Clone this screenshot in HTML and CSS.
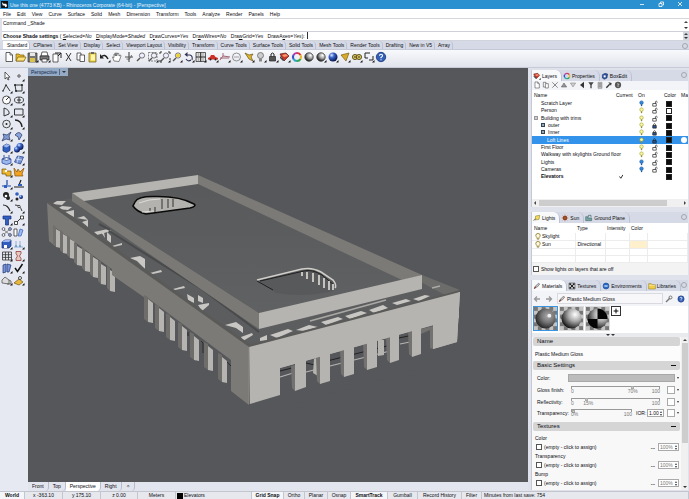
FILE: index.html
```html
<!DOCTYPE html>
<html lang="en">
<head>
<meta charset="utf-8">
<title>Use this one (4773 KB) - Rhinoceros Corporate (64-bit) - [Perspective]</title>
<link rel="stylesheet" href="styles.css">
</head>
<body>
<header class="titlebar">
  <svg class="logo" viewBox="0 0 8 8"><rect width="8" height="8" fill="#111"/><path d="M1 1l2 2 3 0 1 3-2 1-1-2-2 0z" fill="#fff"/></svg>
  <span class="title">Use this one (4773 KB) - Rhinoceros Corporate (64-bit) - [Perspective]</span>
  <button class="win" aria-label="Minimize"><svg viewBox="0 0 8 8"><path d="M2 4.500h4" /></svg></button>
  <button class="win" aria-label="Restore"><svg viewBox="0 0 8 8"><path d="M2 3.500h3v3H2zM3.500 3V2h3v3H5.500"/></svg></button>
  <button class="win" aria-label="Close"><svg viewBox="0 0 8 8"><path d="M2 2l4 4M6 2L2 6"/></svg></button>
</header>
<nav class="menu" id="menu"></nav>
<section class="command">
  <div class="history"><span>Command _Shade</span><div class="updown"><i class="up"></i><i class="down"></i></div></div>
  <div class="prompt"><label for="cmd"><b>Choose Shade settings</b> ( <u>S</u>elected=<em>No</em> <u>D</u>isplayMode=<em>Shaded</em> D<u>r</u>awCurves=<em>Yes</em> Dr<u>a</u>wWires=<em>No</em> Dra<u>w</u>Grid=<em>Yes</em> DrawA<u>x</u>es=<i>Yes</i>):</label><input id="cmd" type="text"><div class="updown dark"><i class="up"></i><i class="down"></i></div></div>
</section>
<nav class="tooltabs" id="tooltabs"></nav>
<div class="toolbar" id="toolbar"></div>
<main class="work">
  <aside class="sidebar" id="sidebar"></aside>
  <section class="center">
    <div class="viewport">
      <button class="viewname">Perspective <span class="sep"></span><i class="down"></i></button>
      <svg class="scene" id="scene" viewBox="28 68 500 414" preserveAspectRatio="xMidYMid slice" role="img" aria-label="Building model"></svg>
    </div>
    <nav class="viewtabs"><a href="#">Front</a><a href="#">Top</a><a href="#" class="on">Perspective</a><a href="#">Right</a><a href="#" aria-label="Add viewport">✧</a></nav>
  </section>
  <aside class="panels">
    <section class="panel layers">
      <nav class="ptabs" data-tabs="Layers:layers,Properties:wheel,BoxEdit:boxedit"></nav>
      <div class="ptools" id="ptools"></div>
      <div class="list">
        <table class="layertable">
          <thead><tr><th class="n">Name</th><th class="cur">Current</th><th class="on">On</th><th class="lk"></th><th class="col">Color</th><th class="ma">Ma</th></tr></thead>
          <tbody id="layers"></tbody>
        </table>
      </div>
      <div class="hscroll"><i class="left"></i><span class="bar"></span><i class="right"></i></div>
    </section>
    <section class="panel lights">
      <nav class="ptabs" data-tabs="Lights:lamp,Sun:sun,Ground Plane:ground"></nav>
      <table class="lighttable">
        <thead><tr><th class="n">Name</th><th class="ty">Type</th><th class="in">Intensity</th><th class="co">Color</th><th></th></tr></thead>
        <tbody>
          <tr><td><svg class="ic8" viewBox="0 0 8 8"><use href="#bulbline"/></svg>Skylight</td><td></td><td></td><td></td><td></td></tr>
          <tr><td><svg class="ic8" viewBox="0 0 8 8"><use href="#bulbline"/></svg>Sun</td><td>Directional</td><td></td><td class="suncolor"></td><td></td></tr>
          <tr><td></td><td></td><td></td><td></td><td></td></tr>
          <tr><td></td><td></td><td></td><td></td><td></td></tr>
        </tbody>
      </table>
      <label class="offlights"><input type="checkbox">Show lights on layers that are off</label>
    </section>
    <section class="panel materials">
      <nav class="ptabs" data-tabs="Materials:brush,Textures:tex,Environments:env,Libraries:lib"></nav>
      <div class="crumbs">
        <button aria-label="Back"><svg viewBox="0 0 8 8"><path d="M7 4H1.500M4 1.500L1.500 4 4 6.500" fill="none" stroke="#999" stroke-width="1.300"/></svg></button>
        <button aria-label="Forward"><svg viewBox="0 0 8 8"><path d="M1 4h5.500M4 1.500L6.500 4 4 6.500" fill="none" stroke="#999" stroke-width="1.300"/></svg></button>
        <div class="path"><svg class="ic8" viewBox="0 0 12 12"><use href="#brush"/></svg>Plastic Medium Gloss</div>
        <button aria-label="Tools"><svg viewBox="0 0 8 8"><path d="M1 7l4-4" stroke="#777" stroke-width="1.500"/><circle cx="5.500" cy="2.500" r="1.500" fill="none" stroke="#777"/></svg></button>
        <button aria-label="Help"><svg viewBox="0 0 12 12"><use href="#help"/></svg></button>
      </div>
      <div class="thumbs">
        <button class="thumb sel" aria-label="Plastic Medium Gloss"><svg viewBox="0 0 24 24"><rect width="24" height="24" fill="url(#chk)"/><circle cx="12" cy="12" r="10.500" fill="url(#ball)"/><circle cx="16" cy="9" r="2" fill="#fff" opacity=".85"/></svg></button>
        <button class="thumb" aria-label="Plastic"><svg viewBox="0 0 24 24"><rect width="24" height="24" fill="url(#chk)"/><circle cx="12" cy="12" r="10.500" fill="url(#ball2)"/></svg></button>
        <button class="thumb" aria-label="Checker"><svg viewBox="0 0 24 24"><rect width="24" height="24" fill="url(#chk)"/><circle cx="12" cy="12" r="10.500" fill="url(#ball2)"/><path d="M12 12.500V1.500A10.500 10.500 0 0 1 22.500 12.500zM12 12.500V22.500A10.500 10.500 0 0 1 1.500 12.500z" fill="#050505"/></svg></button>
        <button class="plus" aria-label="Add material"><svg viewBox="0 0 10 10"><path d="M5 2v6M2 5h6" stroke="#000" stroke-width="1.200"/></svg></button>
      </div>
      <div class="splitter"><i class="down"></i><i class="down"></i></div>
      <div class="props">
        <div class="fields">
          <h3>Name</h3>
          <input class="matname" type="text" value="Plastic Medium Gloss" aria-label="Name">
          <h3>Basic Settings<span class="minus"></span></h3>
          <div class="basic">
            <div class="row"><label for="mc">Color:</label><button id="mc" class="swatch"></button><i class="down"></i></div>
            <div class="row"><label for="gl">Gloss finish:</label><div class="slide"><input id="gl" type="range" value="70"><span><b>0</b><b class="v70">70%</b><b>100</b></span></div><button class="chip" aria-label="Gloss color"></button><i class="down"></i></div>
            <div class="row"><label for="rf">Reflectivity:</label><div class="slide"><input id="rf" type="range" value="15"><span><b>0</b><b class="v15">15%</b><b>100</b></span></div><button class="chip" aria-label="Reflection color"></button><i class="down"></i></div>
            <div class="row"><label for="tr">Transparency:</label><div class="slide"><input id="tr" type="range" value="0"><span><b>0%</b><b>100</b></span></div><label class="ior" for="ior">IOR:</label><div class="spin"><input id="ior" type="text" value="1.00"><div class="updown"><i class="up"></i><i class="down"></i></div></div><button class="chip" aria-label="Transparency color"></button><i class="down"></i></div>
          </div>
          <h3>Textures<span class="minus"></span></h3>
          <div class="textures" id="textures"></div>
        </div>
        <div class="vscroll"><i class="up"></i><span class="bar"></span><i class="down"></i></div>
      </div>
    </section>
  </aside>
</main>
<footer class="status">
  <span class="world on">World</span><span class="c1">x -363.10</span><span class="c2">y 175.10</span><span class="c3">z 0.00</span><span class="c4">Meters</span><span class="c5"><i class="sq"></i>Elevators</span>
  <span class="g1 on">Grid Snap</span><span class="g2">Ortho</span><span class="g3">Planar</span><span class="g4">Osnap</span><span class="g5 on">SmartTrack</span><span class="g6">Gumball</span><span class="g7">Record History</span><span class="g8">Filter</span><span class="g9">Minutes from last save: 754</span>
</footer>
<svg class="defs" aria-hidden="true">
  <defs>
    <pattern id="chk" width="8" height="8" patternUnits="userSpaceOnUse"><rect width="8" height="8" fill="#c4c4c4"/><path d="M0 0h4v4H0zM4 4h4v4H4z" fill="#777"/></pattern>
    <radialGradient id="ball" cx=".62" cy=".38" r=".7"><stop offset="0" stop-color="#aaa"/><stop offset=".45" stop-color="#777"/><stop offset="1" stop-color="#181818"/></radialGradient>
    <radialGradient id="ball2" cx=".68" cy=".3" r=".75"><stop offset="0" stop-color="#fff"/><stop offset=".45" stop-color="#aaa"/><stop offset="1" stop-color="#111"/></radialGradient>
    <radialGradient id="blueball" cx=".35" cy=".3" r=".7"><stop offset="0" stop-color="#dfe9ff"/><stop offset=".4" stop-color="#3863cc"/><stop offset="1" stop-color="#08174f"/></radialGradient>
    <linearGradient id="roof" x1="0" y1="0" x2="0" y2="1"><stop offset="0" stop-color="#58595b"/><stop offset="1" stop-color="#606163"/></linearGradient>
    <symbol id="bulbline" viewBox="0 0 8 8"><path d="M3 5.500Q1.500 4 1.500 2.800a2.500 2.300 0 0 1 5 0Q6.500 4 5 5.500V7H3z" fill="#fffbe0" stroke="#85721f" stroke-width=".9"/></symbol>
  </defs>
</svg>
<script src="app.js"></script>
</body>
</html>
```
FILE: styles.css
```css
* { box-sizing: border-box; }
html, body { height: 100%; }
body {
  margin: 0; display: flex; flex-direction: column; overflow: hidden;
  font: 5px/8px "Liberation Sans", sans-serif;
  color: #0c0c10; background: #e5e7ee;
}
button, input { font: inherit; color: inherit; border: 0; padding: 0; margin: 0; background: none; border-radius: 0; min-width: 0; }
a { color: inherit; text-decoration: none; }
svg { display: block; }
.defs { position: absolute; width: 0; height: 0; }
.up, .down, .left, .right { display: block; width: 0; height: 0; border: 2px solid transparent; flex: none; }
.up { border-top: 0; border-bottom-color: #444; }
.down { border-bottom: 0; border-top-color: #333; }
.left { border-left: 0; border-right-color: #444; }
.right { border-right: 0; border-left-color: #444; }
.updown { display: flex; flex-direction: column; align-items: center; justify-content: space-around; width: 6px; align-self: stretch; }

.titlebar { height: 9px; flex: none; display: flex; align-items: center; background: #2b90cf; color: #e4f3fc; padding-left: 1px; }
.logo { width: 7px; height: 7px; margin-right: 2px; }
.title { flex: 1; }
.win { width: 19px; height: 9px; display: flex; justify-content: center; }
.win svg { width: 8px; height: 8px; fill: none; stroke: #fff; stroke-width: .8; }

.menu { height: 10px; flex: none; display: flex; gap: 6px; padding: 1px 3px; background: #fff; border-bottom: 1px solid #d6d7db; }
.command { flex: none; background: #fff; border-left: 2px solid #dfe2ea; }
.history { height: 13px; display: flex; justify-content: space-between; border-bottom: 1px solid #cfd1d8; padding-left: 1px; }
.prompt { height: 9px; display: flex; padding-left: 1px; border-bottom: 1px solid #d2d4dc; }
.prompt input { flex: 1; border-left: 1px solid #333; margin-left: 2px; height: 7px; }
.prompt em { margin-right: 3px; }
.dark { background: #d5d8e0; }

.tooltabs { height: 9px; flex: none; display: flex; background: #d6dae6; padding-left: 3px; border-bottom: 1px solid #c5c9d6; }
.tooltabs a { padding: 1px 2px 0 3px; border-right: 1px solid #bcc2d3; border-radius: 0 4px 0 0; line-height: 7px; white-space: nowrap; }
.tooltabs a.on { background: #fff; padding-left: 4px; }
.toolbar { height: 18px; flex: none; display: flex; padding: 1px 3px; background: linear-gradient(#f8f9fc, #e1e4ec); border-bottom: 1px solid #c7cbd5; }
.tool { width: 12px; height: 12px; flex: none; }
.tool svg { width: 12px; height: 12px; }

.work { flex: 1; min-height: 0; display: flex; }
.sidebar { width: 28px; flex: none; display: grid; grid-template-columns: 12px 12px; grid-auto-rows: 12px; padding: 2px 1px; align-content: start; background: #e6e9f1; }
.center { flex: 1; min-width: 0; display: flex; flex-direction: column; }
.viewport { flex: 1; min-height: 0; position: relative; background: #56575a; }
.scene { position: absolute; inset: 0; width: 100%; height: 100%; }
.viewname { position: absolute; z-index: 1; left: 0; top: 0; display: flex; align-items: center; gap: 2px; height: 8px; padding: 0 2px 0 3px; background: #95aac5; color: #14284a; }
.sep { width: 1px; height: 6px; background: #556a8a; }
.viewtabs { height: 9px; flex: none; display: flex; background: #e3e5ee; }
.viewtabs a { padding: 0 4px; border-right: 1px solid #b7bccb; border-radius: 0 0 4px 0; }
.viewtabs a.on { background: #fff; }

.panels { width: 161px; flex: none; display: flex; flex-direction: column; gap: 5px; padding: 2px 1px 1px 3px; background: #dfe2eb; }
.panel { display: flex; flex-direction: column; flex: none; background: #f3f4f8; border-left: 1px solid #c5c9d3; }
.layers { flex: 138 1 0; min-height: 0; }
.lights { height: 63px; }
.materials { flex: 211 1 0; min-height: 0; }
.ptabs { height: 11px; flex: none; display: flex; background: #d6dae6; }
.ptabs a { display: flex; align-items: center; gap: 1px; padding: 0 4px 0 1px; border-right: 1px solid #bcc2d3; border-radius: 0 6px 0 0; white-space: nowrap; }
.ptabs a.on { background: #f8f9fb; }
.ptabs svg, .ic8 { width: 8px; height: 8px; flex: none; }
.gear { width: 6px; height: 6px; flex: none; border: 1px solid #a3a6ad; border-radius: 50%; }
.ptabs .gear, .tooltabs .gear { margin: 2px 1px 0 auto; }
.ptools { height: 9px; flex: none; display: flex; gap: 1px; padding-left: 1px; }
.ptools .tool, .ptools svg { width: 8px; height: 8px; }
.list { flex: 1; min-height: 0; overflow: hidden; background: #fff; }
table { border-collapse: collapse; width: 100%; table-layout: fixed; }
th, td { padding: 0; text-align: left; white-space: nowrap; }
th { font-weight: normal; }
.layertable th { height: 10px; }
.layertable td { height: 7px; line-height: 7px; }
.layertable tr:nth-child(3n) td { height: 8px; }
.layertable .n { padding-left: 2px; }
.cur { width: 22px; }
.layertable .on { width: 13px; }
.lk { width: 13px; }
.col { width: 17px; }
.ma { width: 7px; overflow: hidden; }
.layertable td.l0 { padding-left: 9px; }
.layertable td.g0 { padding-left: 2px; }
.layertable td.g1 { padding-left: 9px; }
.layertable td.l2 { padding-left: 15px; }
.layertable svg { width: 7px; height: 7px; }
.layertable tr.sel { background: #3393ea; color: #fff; }
.layertable tr.bold { font-weight: bold; }
.box { display: inline-block; width: 4px; height: 4px; border: 1px solid #999; background: #ccc; margin-right: 3px; }
.box.deep { border-color: #345; background: #9ab; }
.csq { display: block; width: 6px; height: 6px; margin-left: 2px; background: #0b0b0b; border: 1px solid #222; }
.csq.open { background: #fff; }
.dot { display: block; width: 6px; height: 6px; border-radius: 50%; background: #fff; }
.hscroll { height: 8px; flex: none; display: flex; align-items: center; gap: 3px; padding: 1px 2px; background: #f0f0f1; }
.hscroll .bar { flex: 1; height: 6px; background: #cdcdce; margin-right: 14px; }

.lighttable { background: #fff; flex: none; }
.lighttable th { height: 10px; padding-left: 2px; }
.lighttable td { height: 7px; line-height: 7px; border-bottom: 1px solid #ececec; border-right: 1px solid #ececec; padding-left: 2px; }
.lighttable td svg { float: left; height: 7px; }
.lighttable .n { width: 43px; }
.ty { width: 30px; }
.in { width: 24px; }
.co { width: 18px; }
.lighttable td.suncolor { background: #fff0cd; }
.offlights { display: flex; align-items: center; gap: 2px; padding-left: 1px; flex: 1; background: #f3f3f4; }
input[type=checkbox] { appearance: none; width: 6px; height: 6px; border: 1px solid #555; background: #fff; flex: none; }

.crumbs { height: 15px; flex: none; display: flex; align-items: center; gap: 2px; padding: 0 1px; }
.crumbs button { width: 10px; height: 8px; }
.crumbs button svg { width: 8px; height: 8px; }
.path { flex: 1; height: 11px; display: flex; align-items: center; gap: 1px; border: 1px solid #d9dae0; background: #f7f7f9; }
.thumbs { height: 27px; flex: none; display: flex; gap: 1px; padding: 0 1px; background: #fff; }
.thumb { width: 25px; height: 25px; border: 1px solid #ddd; }
.thumb.sel { border-color: #3b94e0; }
.thumb svg { width: 23px; height: 23px; }
.plus { width: 10px; height: 10px; border: 1px solid #333; }
.plus svg { width: 8px; height: 8px; }
.splitter { height: 4px; flex: none; display: flex; justify-content: center; align-items: center; gap: 1px; background: #e9eaee; }
.props { flex: 1; min-height: 0; display: flex; background: #f8f8f9; }
.fields { flex: 1; min-width: 0; padding: 0 1px; display: flex; flex-direction: column; overflow: hidden; }
h3 { margin: 0; height: 9px; flex: none; display: flex; align-items: center; justify-content: space-between; padding: 0 4px; background: #d5d5d6; font: 6px/9px "Liberation Sans", sans-serif; border-radius: 2px; }
.minus { width: 5px; height: 1px; background: #111; }
.matname { height: 15px; flex: none; background: #fcfcfc; padding-left: 2px; }
.basic { height: 52px; flex: none; display: flex; flex-direction: column; padding: 2px 1px 3px 4px; }
.row { flex: 1; display: flex; align-items: center; gap: 1px; }
.row label { width: 33px; flex: none; }
.row label.ior { width: 10px; margin-left: 3px; }
.row > .down { margin-left: 1px; border-left-width: 1px; border-right-width: 1px; }
.swatch { flex: 1; height: 8px; background: #bcbcbd; border: 1px solid #a8a8a8; margin-left: -3px; }
.slide { flex: 1; min-width: 0; }
.slide input { appearance: none; display: block; width: 100%; height: 3px; border: 1px solid #999; border-bottom: 0; }
.slide input::-webkit-slider-thumb { appearance: none; width: 3px; height: 3px; background: #ccc; border: 1px solid #aaa; }
.slide span { display: flex; justify-content: space-between; line-height: 5px; color: #777; }
.slide b { font-weight: normal; }
.v70 { margin-left: 45%; }
.v15 { margin-right: 55%; }
.chip { width: 8px; height: 8px; border: 1px solid #aaa; background: #fff; margin-left: 6px; }
.ior ~ .chip { margin-left: 2px; }
.spin { display: flex; width: 17px; height: 8px; flex: none; border: 1px solid #aaa; background: #fff; }
.spin input { flex: 1; width: 0; padding-left: 1px; line-height: 6px; }
.spin .updown { width: 4px; }
.spin .up, .spin .down { border-left-width: 1px; border-right-width: 1px; }
.textures { padding: 3px 1px 0 2px; }
.trow { display: flex; align-items: center; height: 10px; }
.trow label { flex: 1; display: flex; align-items: center; gap: 2px; padding-left: 1px; }
.trow .spin { width: 21px; margin-left: 3px; color: #777; }
.trow button { font-weight: bold; }
.vscroll { width: 7px; flex: none; display: flex; flex-direction: column; align-items: center; gap: 2px; padding: 2px 0; background: #f0f0f1; }
.vscroll .bar { width: 6px; flex: 0 1 100px; background: #cdcdce; margin-bottom: auto; }

.status { height: 8px; flex: none; display: flex; background: #e6e8ee; border-top: 1px solid #c3c6cf; line-height: 7px; white-space: nowrap; }
.status span { border-right: 1px solid #c3c6cf; text-align: center; flex: none; }
.status .on { font-weight: bold; background: #f5f6f9; }
.world { width: 25px; }
.c1, .c2, .c4 { width: 38px; }
.c3 { width: 37px; }
.status .c5 { flex: 1 1 0; display: flex; align-items: center; gap: 1px; padding-left: 1px; }
.sq { width: 6px; height: 6px; background: #000; }
.g1 { width: 32px; }
.g2 { width: 21px; }
.g3, .g4 { width: 23px; }
.g5 { width: 37px; }
.g6 { width: 30px; }
.g7 { width: 44px; }
.g8 { width: 20px; }
.status .g9 { width: 207px; text-align: left; padding-left: 2px; }
```
FILE: app.js
```js
const el = id => document.getElementById(id);
const K = '#222', B = '#315fc0', L = '#9db8ef';
const line = (d, c = K, w = 0.9) => `<path d="${d}" fill="none" stroke="${c}" stroke-width="${w}"/>`;
const fill = (d, c, s = 'none') => `<path d="${d}" fill="${c}" stroke="${s}" stroke-width=".7"/>`;
const circ = (x, y, r, f, s = 'none') => `<circle cx="${x}" cy="${y}" r="${r}" fill="${f}" stroke="${s}" stroke-width=".8"/>`;
const tri = fill('M11.500 9v2.500H9z', '#111');
const lens = line('M2 10l3-3', '#555', 1.5) + circ(7, 4.5, 2.6, '#eef', '#555');

const icons = {
  doc: fill('M3 1.500h4l2.500 2.500v6.500H3z', '#fff', K) + line('M7 1.500V4h2.500', K, .6),
  open: fill('M1 3h3l1 1h4v6H1z', '#e5b92f', '#7b5b08') + fill('M1 10l2-4h8l-2 4z', '#ffe37a', '#7b5b08'),
  save: fill('M1 2h9v9H1z', '#777', '#333') + fill('M3 2h5v3H3z', '#e8e8e8') + fill('M3 7h5v4H3z', '#d8c24b') + tri,
  print: fill('M3 1h5l1 4H2z', '#fff', K) + fill('M1 5h9v4H1z', '#777', K) + fill('M3 8h5v3H3z', '#fff', K) + tri,
  exportdoc: fill('M2 3h5v8H2z', '#fff', K) + line('M4 2h6v5M7 5l3-3', K, 1),
  cut: line('M3 2l5 8M8 2L3 10', '#333', 1),
  copy: fill('M2 2h4v7H2z', '#fff', K) + fill('M5 4h4.500v6.500H5z', '#fff', K),
  paste: fill('M2 2h7v9H2z', '#e8cc3f', '#6b5a16') + fill('M4 3.500h4v6H4z', '#fff6b0') + fill('M4 1h3v2H4z', '#666'),
  undo: line('M2 6Q6 2 9 8', K, 1.5) + fill('M1 3v4.500h4z', K) + tri,
  hand: fill('M3 10L1.500 6 3 6.500V3h1.300v2V2h1.300v3l1-3 1.200.5L8 5l1.500-1 .5 1-2 5.500z', '#fff', '#555'),
  rotate: line('M6 1v10M2 6h8', '#555', 1.2) + line('M3.500 8Q8 9 8.500 4', '#555', .8),
  zoom: lens, zoomwin: lens + '<rect x="1.500" y="1.500" width="8.500" height="8.500" fill="none" stroke="#555" stroke-width=".7" stroke-dasharray="2 1"/>' + tri,
  zoomext: lens + line('M1 3V1h2M9 1h2v2M1 9v2h2M11 7v2', K) + tri,
  zoomsel: lens + circ(7, 4.5, 2, '#f1d22e') + tri,
  back: line('M3 4h4q3 1 2 5M3 8q2 3 5 1', '#335', 1.1) + fill('M4.500 1v5L1.500 3.500z', '#335') + tri,
  grid4: fill('M1 1.500h9.500v9H1z', '#ddd', K) + line('M5.700 1.500v9M1 6h9.500', K, 1) + line('M3.400 1.500v9M8 1.500v9', '#888', .6) + tri,
  car: fill('M1 7l2-1 1-2h3l1.500 2L11 7v1.500H1z', '#d02f28') + circ(3.500, 8.500, 1, K) + circ(8.500, 8.500, 1, K) + tri,
  cplane: line('M1 9l3-4 7 1M4 5V2M1 7h9', '#956') + tri,
  circ: circ(5.500, 6, 4, 'none', '#777') + line('M3 6h5', '#999') + tri,
  osnap: fill('M2 2l4 2 4-1-2 3 2 4-4-2z', '#e0b92f', '#675216') + tri,
  bulb: circ(5.500, 4.500, 3, '#ccc', '#666') + fill('M4 7.500h3v3H4z', '#888') + tri,
  lock: fill('M2.500 5.500h6V10h-6z', '#555', K) + line('M4 5.500V3q1.500-2 3 0v2.500', K, 1) + tri,
  layers: fill('M1 3l6-1 3 3-5 5z', '#cf3527', '#571a15') + fill('M3 4l4-1 2 2-4 1z', '#f49a70') + fill('M1 5l4 4-1 1-3-3z', '#444') + tri,
  wheel: [['#d33', 'M6 2A4 4 0 0 1 9.500 4'], ['#e8b72e', 'M9.500 4A4 4 0 0 1 9.500 8'], ['#3aa745', 'M9.500 8A4 4 0 0 1 6 10'], ['#2fa6c9', 'M6 10A4 4 0 0 1 2.500 8'], ['#3450c4', 'M2.500 8A4 4 0 0 1 2.500 4'], ['#b13bb0', 'M2.500 4A4 4 0 0 1 6 2']].map(a => line(a[1], a[0], 2.1)).join(''),
  gray: circ(6, 6, 4.200, 'url(#ball2)', '#333'), gray2: circ(6, 6, 4.200, 'url(#ball2)', '#333') + tri,
  blue: circ(6, 6, 4.500, 'url(#blueball)') + tri,
  cone: fill('M2 4l8-2-3 8z', '#d8ac2a', '#795b12') + tri,
  gears: circ(4, 6, 2.600, '#d9c25a', '#453b12') + circ(8, 6, 2.600, '#d9c25a', '#453b12') + circ(4, 6, .8, K) + circ(8, 6, .8, K) + tri,
  dims: line('M2 2h5M2 2v5h3M6 9h4V5', K, 1) + tri,
  help: circ(6, 6, 4.700, '#335fb8', '#163474') + line('M4.500 4.800q0-1.500 1.500-1.500t1.500 1.300Q7.500 6 6 6.500v.8M6 8.200v1', '#fff', 1.1),
  pointer: fill('M4 2v7l1.700-1.500L7 10l1-.5-1.200-2.300H9z', '#fff', K),
  point: circ(6, 6, 1.2, '#fff', K) + tri,
  poly: line('M2 9l3-6 4 6') + circ(2, 9, .8, K) + circ(5, 3, .8, K) + tri,
  cv: line('M2 3h7v6H3z') + circ(2, 3, 1, K) + circ(9, 3, 1, K) + circ(3, 9, 1, K) + tri,
  circle: circ(5.500, 6, 4, '#fff', K) + line('M5 6l3-3') + tri,
  ellipse: '<ellipse cx="6" cy="6" rx="4.500" ry="3" fill="none" stroke="#222" stroke-width=".8"/>' + line('M6 3v6M4 6h4') + tri,
  arc: line('M3 2v8l5-2Q9 4 3 2') + tri,
  rect: line('M1.500 3h8.500v6H1.500z') + tri,
  circ2: circ(5.500, 6, 3.8, 'none', K) + circ(5.500, 6, 1, K) + tri,
  curve: line('M2 2q6 0 7 7', K, 1.4) + tri,
  surf: fill('M2 4l4 1 4-3-2 4 1 4-4-1-4 2 2-4z', '#819bd1', '#24325f') + tri,
  surf2: fill('M2 5q4-5 7 0L6 10q0-4-4-5z', '#89a5dc', '#24325f') + tri,
  cube: fill('M2 4l3.500-2L9 3.500v5L5.500 10.500 2 9z', B, '#162d6d') + fill('M2 4l3.500-2L9 3.500 5.500 5.500z', L) + tri,
  balls: circ(7, 4.500, 3.500, 'url(#blueball)') + circ(4, 7.500, 3, 'url(#blueball)') + tri,
  cyl: fill('M1 5q4.500 3 9 0v4q-4.500 3-9 0z', L, '#24429a') + line('M1 5q4.500-3 9 0M3 1v3M8 1v3', '#24429a') + tri,
  sheet: fill('M1.500 8l3-6 6 1-3 7z', '#7895d6', '#1b3686') + line('M3 5l6 1M6 2L4 9', '#fff', .6) + tri,
  puzzle: fill('M1 3h4v2h5v5H5V8H1z', '#efb62b', '#6f4d0c') + circ(5, 5, 1.2, '#fff') + tri,
  burst: fill('M1 2l3 4 1-3 2 3 4-4-2 6 1 2H2z', '#f2a321', '#885106'),
  trim: line('M1 8h9M6 2v5', '#1c48a2', 1.2) + fill('M3 7h3v3H3z', B) + tri,
  split: line('M1 9h10M8 2L6 7', K, 1.2) + fill('M5 6h4v2H5z', B),
  blob: circ(5, 5, 3, '#222') + circ(7, 8, 2, '#222') + circ(5, 6, 1.3, '#fff') + tri,
  dots: circ(4, 4, 1.8, B) + circ(8, 7, 2, 'url(#blueball)') + circ(4, 9, 1.5, K),
  arc2: line('M2 3q5 0 7 6', K, 1.2) + tri, arc3: line('M2 3q5 0 7 6') + circ(6, 4.500, 1.2, '#fff', K) + tri,
  tee: fill('M2 2h8v3H7.500v6h-3V5H2z', B, '#172f7c') + tri,
  scale: line('M3 9l6-6') + '<path d="M1.500 7.500h3v3h-3zM7.500 2h3v3h-3z" fill="#fff" stroke="#222" stroke-width=".8"/>' + tri,
  nodes: line('M2 3l7 6M2 9l7-6', '#555', .7) + circ(2.500, 3, 1.4, '#fff', '#445') + circ(2.500, 9, 1.4, '#fff', '#445') + circ(9, 3, 1.4, L, '#445') + circ(9, 9, 1.4, L, '#445'),
  mirror: fill('M1 3h3v7H1z', '#fff', K) + fill('M7 3l3 1-2 6-3 0z', L, B),
  box: fill('M1 4l3-2h6v6L8 10H1z', B, '#162d6d') + fill('M1 4l3-2h6L8 4z', L) + fill('M3 7h3v3H3z', '#fff') + tri,
  mesh: line('M1 9h9M3 7V3M7 7V3', '#8aa4dc') + circ(3, 8, 1, '#59b') + circ(7, 8, 1, '#59b') + tri,
  array: line('M1.500 2h9v8h-9zM4.500 2v8M7.500 2v8M1.500 4.700h9M1.500 7.400h9', '#333', .8) + tri,
  timer: fill('M3 1.500h5v2L6.500 6 8 8.500v2H3v-2L4.500 6 3 3.500z', '#e8c7c0', '#8c2d27') + tri,
  book: fill('M2 3l3-1v8l-3 1zM6 2l4 1-2 7H6z', '#7594dc', '#1f3576') + tri,
  check: line('M2 6l2.500 3.500L9.500 2', '#111', 1.5) + tri,
  solid: fill('M1 9V6l3-3 4 3v4zM8 6l2 1v3H6', '#ddd', '#444') + tri,
  gold: fill('M1 9l5-4 4 3-4 3z', '#e8b83c', '#745315') + circ(7, 4, 1.5, '#fff', K) + tri,
  boxedit: fill('M2 4l4-2 4 1-1 6-4 2-3-2z', '#2b4f9e', '#10265a') + fill('M4 5h3v3H4z', '#fff'),
  lamp: fill('M3 9l1-6 6-1-1 6z', '#f6dd5a', '#6f6112') + line('M1 10l3-3', '#555', 1.3),
  sun: circ(6, 6, 3.500, '#7b3b20') + line('M6 1v10M1 6h10M2.500 2.500l7 7M9.500 2.500l-7 7', '#b65b2a', .8),
  ground: fill('M1 9V4h3v2h6v4H1z', '#77a4a0', '#28565a') + line('M5 5V2h4v3', '#28565a'),
  brush: line('M2 10l2-3', '#7d2f20', 2) + fill('M3.500 6.500L8 2l2 1-4 5z', '#ccc', '#333'),
  tex: fill('M1.500 1.500h9v9h-9z', '#fff', K) + fill('M2 2h3v3H2zM7 2h3v3H7zM4.500 4.500h3v3h-3zM2 7h3v3H2zM7 7h3v3H7z', K),
  env: circ(6, 6, 4.500, '#2467c6', '#14428d') + fill('M2 6q4-2 8 0-4 2-8 0z', '#cfe4fb'),
  lib: fill('M1 2.500h4l1 1.500h5v6.500H1z', '#f0cf45', '#86690f') + line('M1 5h10', '#fff', .6),
  x: line('M2 2l8 8M10 2l-8 8', '#555', 1), triup: fill('M6 3l4 6H2z', '#999', '#444'), tridn: fill('M6 9L2 3h8z', '#ccc', '#777'),
  trileft: fill('M9 1v10L3 6z', '#333'), funnel: fill('M2 2h8L7 6v5H5V6z', '#444'), page: fill('M3 2h6v9H3z', '#bbb', '#777') + line('M4 4h4M4 6h4M4 8h4', '#777'),
  hammer: line('M2 10l5-5', '#333', 2) + fill('M5 2l5 1-1 4z', '#333'), qgray: circ(6, 6, 4.700, '#555') + line('M4.500 5q1-2 3 0L6 7v2', '#fff')
};
const svg = n => `<svg viewBox="0 0 12 12">${icons[n]}</svg>`;
const tools = s => s.split(' ').map(n => `<button class="tool" aria-label="${n}">${svg(n)}</button>`).join('');
['brush', 'help'].forEach(n => document.querySelectorAll(`use[href="#${n}"]`).forEach(u => { u.parentNode.innerHTML = icons[n]; }));

el('menu').innerHTML = 'File,Edit,View,Curve,Surface,Solid,Mesh,Dimension,Transform,Tools,Analyze,Render,Panels,Help'.split(',').map(t => `<a href="#">${t}</a>`).join('');
el('tooltabs').innerHTML = 'Standard,CPlanes,Set View,Display,Select,Viewport Layout,Visibility,Transform,Curve Tools,Surface Tools,Solid Tools,Mesh Tools,Render Tools,Drafting,New in V5,Array'.split(',').map((t, i) => `<a href="#"${i ? '' : ' class="on"'}>${t}</a>`).join('') + '<i class="gear"></i>';
el('toolbar').innerHTML = tools('doc open save print exportdoc cut copy paste undo hand rotate zoom zoomwin zoomext zoomsel back grid4 car cplane circ osnap bulb lock layers wheel gray gray2 blue cone gears dims help');
el('sidebar').innerHTML = tools('pointer point poly cv circle ellipse arc rect circ2 curve surf surf2 cube balls cyl sheet puzzle burst trim split blob dots arc2 arc3 tee scale nodes mirror box mesh array timer book check solid gold');
el('ptools').innerHTML = tools('doc copy x triup tridn trileft funnel page hammer qgray');
document.querySelectorAll('.ptabs').forEach(n => {
  n.innerHTML = n.dataset.tabs.split(',').map((t, i) => { const [a, b] = t.split(':'); return `<a href="#"${i ? '' : ' class="on"'}>${svg(b)}${a}</a>`; }).join('') + '<i class="gear"></i>';
});

const bulb = c => `<svg viewBox="0 0 8 8"><circle cx="4" cy="3" r="2" fill="${c ? '#2f8ae0' : '#f8f6a0'}" stroke="${c ? '#1b559c' : '#a3a12a'}" stroke-width=".7"/><path d="M3.300 5h1.500v2H3.300z" fill="${c ? '#1b559c' : '#8b8a3c'}"/></svg>`;
const lock = c => `<svg viewBox="0 0 8 8"><path d="M2 4h4v3H2z" fill="${c ? '#26508f' : '#fff'}" stroke="#222" stroke-width=".8"/><path d="${c ? 'M3 4V2.500q1-1.500 2 0V4' : 'M5 4V2q1-1.500 2 0v1'}" fill="none" stroke="#222" stroke-width=".8"/></svg>`;
el('layers').innerHTML = [
  ['Scratch Layer', 'l0', 1, 0], ['Person', 'l0', 0, 0, 'open'], ['Building with trims', 'g0', 0, 0], ['outer', 'g1', 0, 1], ['Inner', 'g1', 0, 1],
  ['Loft Lines', 'l2', 0, 1, '', 'sel'], ['First Floor', 'l0', 0, 0], ['Walkway with skylights Ground floor', 'l0', 0, 0], ['Lights', 'l0', 1, 0], ['Cameras', 'l0', 1, 0], ['Elevators', 'l0', -1, 0, '', 'bold']
].map(([n, c, b, l, o = '', r = '']) => `<tr class="${r}"><td class="${c}">${c[0] === 'g' ? `<i class="box${c === 'g1' ? ' deep' : ''}"></i>` : ''}${n}</td><td>${b < 0 ? '<svg viewBox="0 0 8 8"><path d="M4 4l1.500 2L8 2" fill="none" stroke="#111"/></svg>' : ''}</td><td>${b < 0 ? '' : bulb(b)}</td><td>${b < 0 ? '' : lock(l)}</td><td><i class="csq ${o}"></i></td><td>${r === 'sel' ? '<i class="dot"></i>' : ''}</td></tr>`).join('');

el('textures').innerHTML = ['Color', 'Transparency', 'Bump'].map(t => `<div>${t}</div><div class="trow"><label><input type="checkbox">(empty - click to assign)</label><button aria-label="${t} options">...</button><div class="spin"><input type="text" value="100%" aria-label="${t} amount"><div class="updown"><i class="up"></i><i class="down"></i></div></div></div>`).join('');

/* Building model */
const P = (pts, f) => `<polygon points="${pts}" fill="${f}"/>`;
const BG = '#56575a', SIDE = '#7c7a76', LIT = '#b6b4b0', TOP = '#5c5d5f', HI = '#c9c7c3';
let s = P('28,68 528,68 528,482 28,482', BG);
s += P('47,203 72,198 198,182 422,276 460,292 249,347', TOP);
s += P('400,271 422,275 460,290 445,295', '#6c6c6b');
[[52, 204, 57, 201, 66, 201, 62, 205], [57, 209, 62, 206, 72, 207, 68, 210], [65, 212, 74, 210, 74, 217], [77, 218, 84, 216, 88, 220, 82, 219], [82, 222, 88, 220, 88, 227], [94, 232, 108, 229, 111, 231, 97, 235], [101, 232, 104, 232, 105, 238], [107, 232, 111, 236, 111, 243, 107, 240], [112, 246, 122, 243, 122, 245, 113, 247], [130, 258, 140, 256, 145, 259, 145, 269, 137, 261], [150, 273, 161, 270, 162, 272, 153, 274], [173, 289, 184, 286, 185, 288, 175, 290], [187, 294, 194, 298, 194, 303, 188, 300], [198, 295, 203, 298, 203, 303, 198, 301], [198, 305, 209, 303, 209, 305, 202, 311], [225, 325, 236, 322, 243, 327, 243, 333, 236, 328], [241, 337, 252, 333, 253, 335, 243, 341]].forEach(p => s += P(p.join(' '), HI));
s += P('260,338 267,335 267,340 260,341', HI);
[[270, 335, 288, 329, 293, 331, 277, 338], [296, 330, 309, 325, 318, 327, 304, 331], [321, 322, 338, 317, 343, 319, 326, 325], [345, 316, 361, 311, 367, 313, 350, 319], [369, 310, 383, 305, 388, 308, 374, 313], [392, 303, 406, 299, 411, 301, 397, 305], [413, 299, 425, 295, 430, 296, 419, 301]].forEach(p => s += P(p.join(' '), HI));
s += line('M310 321L386 300M432 288l8-2', '#aaa9a6', 1.5);
s += line('M49 202L250 346L459 292', '#5a5a58', 3);
s += line('M99 224L110 230M109 231L203 290L259 332', '#494a4b', 2);
s += P('72,193 259,313 259,329 72,201', '#7b7975');
s += P('72,193 198,175 422,275 259,313', 'url(#roof)');
s += P('72,193 198,175 198,184 84,201', LIT);
s += P('198,175 422,275 402,280 198,184', '#7c7a77');
s += P('259,313 422,275 422,289 259,329', LIT);
/* Roof openings */
s += '<path d="M135 202Q138 196 155 196.500Q180 196 194 204Q197 206 190 208L146 214Q137 212 133 206Z" fill="#b4b2ae" stroke="#0a0a0a" stroke-width="1.600"/>';
s += line('M150 208v4M155 207v5M162 199v10M168 199v9M173 199v8', '#636360', 1.6) + line('M139 203L149 200L160 199M142 212l12-1', '#dedcd8', 1);
s += '<path d="M257 280L302 269Q312 267 321 272L335 281Q338 287 333 291Q305 298 276 293Z" fill="#58595b"/>';
s += line('M257 280L302 269Q312 267 321 272L333 280Q337 285 335 288', '#d0cec9', 1.6) + line('M257 281L273 290M260 281L304 271Q312 269 322 275L334 285', '#111', .8);
s += [[302, 272, 4], [307, 272, 7], [313, 273, 9], [319, 275, 10], [324, 278, 10], [329, 281, 9], [333, 284, 6]].map(a => line(`M${a[0]} ${a[1]}v${a[2]}`, '#c5c3bf', 2)).join('');
/* Long side */
s += P('47,203 249,347 249,405 231,391 231,366 145,300 144,297 112,275 112,270 56,228 55,246 49,241', SIDE);
s += P('56,229 116,272 144,296 145,325 112,300 60,260', BG);
s += P('145,296 231,360 231,396 145,330', BG);
[[56, 229, 18], [63, 234, 19], [70, 239, 19], [77, 246, 19], [85, 251, 20], [93, 257, 20], [101, 264, 20], [110, 270, 21]].forEach(([x, y, h]) => {
  s += P([x - 3, y - 4, x, y - 2, x, y + h, x - 3, y + h - 3].join(' '), '#72706d') + P([x, y, x + 5, y + 3, x + 5, y + h + 1, x, y + h].join(' '), LIT);
});
s += P('112,265 148,290 148,300 112,275', SIDE);
[[148, 299, 23], [159, 308, 23], [170, 317, 23], [182, 326, 24], [194, 336, 24], [208, 346, 24], [222, 357, 25]].forEach(([x, y, h]) => {
  s += P([x - 4, y - 4, x, y - 2, x, y + h, x - 4, y + h - 3].join(' '), '#6e6d6a') + P([x, y, x + 5, y + 4, x + 5, y + h + 1, x, y + h].join(' '), LIT);
});
s += line('M188 332v4M201 341l2 2v10M227 362l4 4', '#222', .8);
/* Short side */
s += P('249,347 460,292 457,342 433,349 433,342 280,395 250,404', LIT);
s += P('280,408 280,368 433,325 433,365', BG);
s += line('M280 371l12-3M306 363l13 3M327 361l60-15M399 338l14-3', '#222', 1) + line('M280 377l13-4M306 372l88-22M400 344l10-2', LIT, 1.2);
s += P('314,359 318,357 318,376 313,373', LIT) + P('378,340 384,340 384,355 378,356', LIT);
[[295, 306, 366, 391, 387], [320, 330, 357, 384, 381], [344, 354, 349, 377, 374], [367, 377, 342, 370, 367], [390, 399, 337, 363, 360], [412, 421, 330, 357, 354]].forEach(([a, b, t, y1, y2]) => {
  s += P([a - 4, t, a, t - 1, a, y1, a - 3, y1 - 3].join(' '), '#737270') + P([a, t - 5, b, t - 8, b, y2, a, y1].join(' '), LIT);
});
s += P('421,329 433,326 433,349 430,348 430,330 421,334', '#737270');
s += P('270,350 459,296 459,318 280,368', LIT);
s += P('433,320 440,300 460,292 457,342 433,349', LIT);
s += line('M249 347V404', '#8e8c89', .8);
el('scene').innerHTML = s;
```
